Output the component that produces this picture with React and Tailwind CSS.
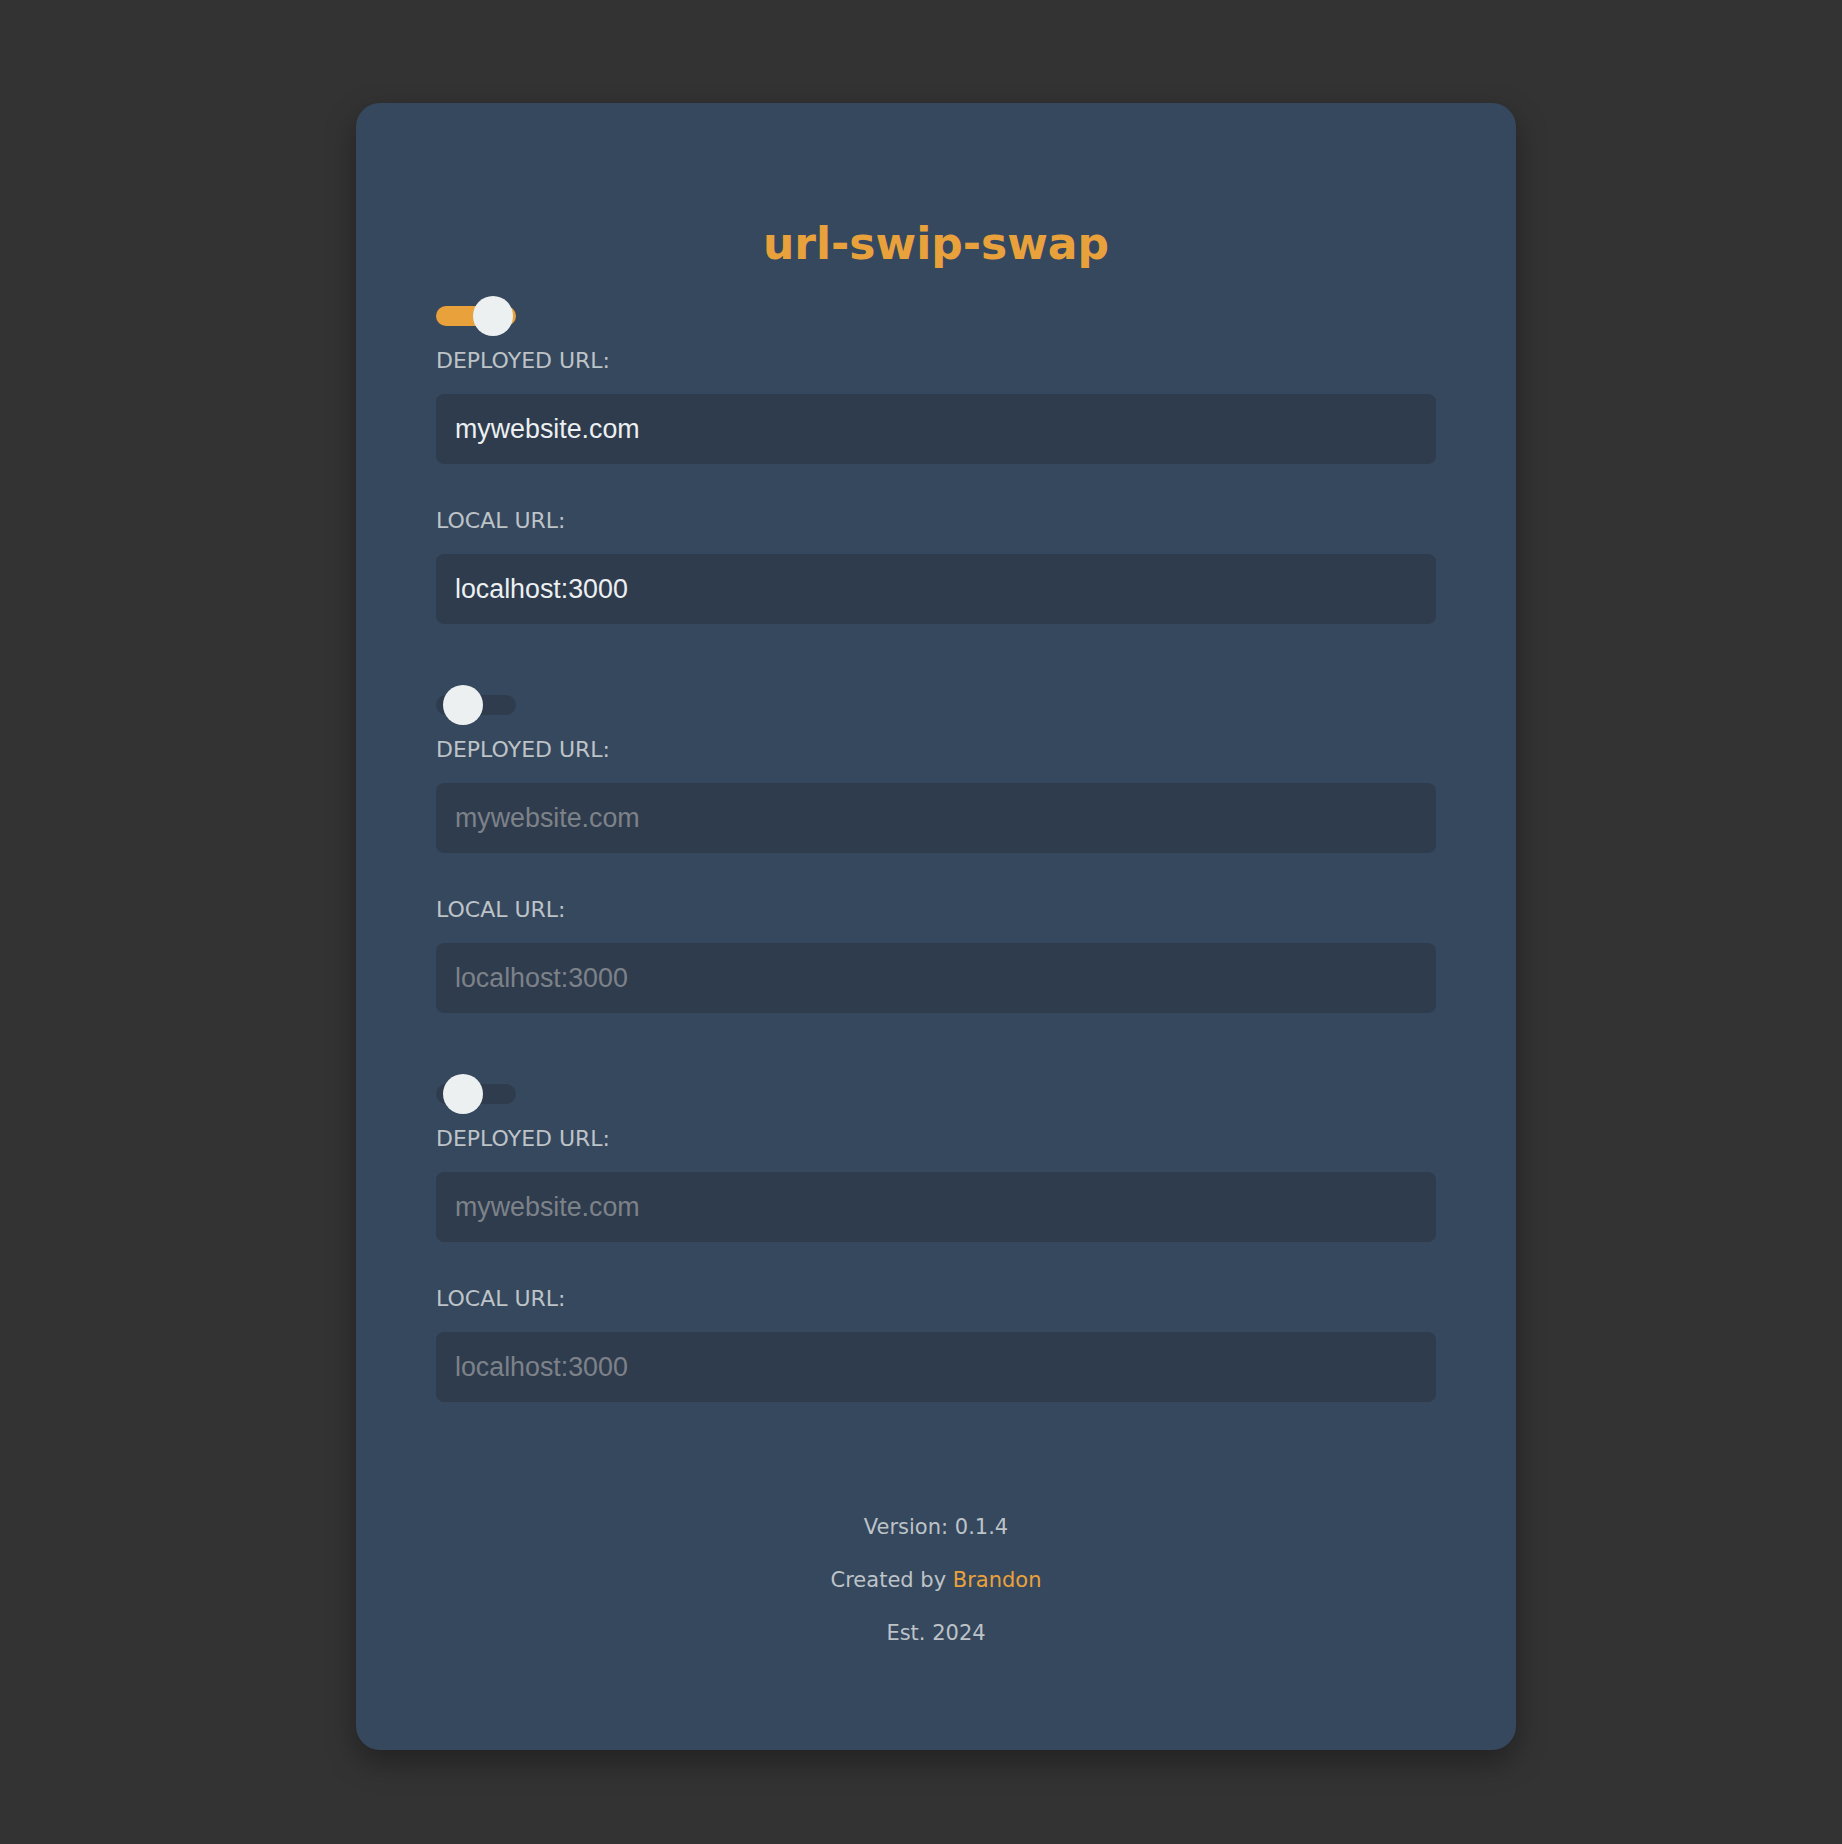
import { useState } from "react";

const SANS = "font-['DejaVu_Sans',_Verdana,_sans-serif]";

function Toggle({ on, onChange }) {
  return (
    <button
      type="button"
      onClick={onChange}
      className="relative flex h-[40px] w-[80px] items-center"
    >
      <span
        className={`block h-[20px] w-[80px] rounded-full ${
          on ? "bg-[#e9a23b]" : "bg-[#2f3c4e]"
        }`}
      />
      <span
        className={`absolute top-0 h-[40px] w-[40px] rounded-full bg-[#ecf0f1] ${
          on ? "left-[37px]" : "left-[7px]"
        }`}
      />
    </button>
  );
}

function UrlField({ label, placeholder, value, onChange, disabled }) {
  return (
    <div className="flex flex-col gap-[21px]">
      <label className={`${SANS} text-[22px] leading-[24px] text-[#bdc3c7]`}>
        {label}
      </label>
      <input
        type="text"
        value={value}
        placeholder={placeholder}
        disabled={disabled}
        onChange={(e) => onChange(e.target.value)}
        className="h-[70px] w-full rounded-[8px] bg-[#2f3c4e] pl-[19px] pr-4 font-['Liberation_Sans',_Arial,_sans-serif] text-[26.8px] text-[#ecf0f1] outline-none placeholder:text-[#7d8289]"
      />
    </div>
  );
}

export default function App() {
  const [rows, setRows] = useState([
    { on: true, deployed: "mywebsite.com", local: "localhost:3000" },
    { on: false, deployed: "", local: "" },
    { on: false, deployed: "", local: "" },
  ]);

  const update = (i, patch) =>
    setRows((prev) => prev.map((r, idx) => (idx === i ? { ...r, ...patch } : r)));

  return (
    <div className="flex min-h-screen justify-center bg-[#333333] pb-[94px] pl-[30px] pt-[103px]">
      <div className="flex w-[1160px] flex-col rounded-[24px] bg-[#36485e] px-[80px] pb-[105px] pt-[116px] shadow-[0_12px_30px_rgba(0,0,0,0.35)]">
        <h1
          className={`${SANS} text-center text-[44px] font-bold leading-[50px] text-[#e9a23b]`}
        >
          url-swip-swap
        </h1>

        <div className="mt-[27px] flex flex-col gap-[61px]">
          {rows.map((row, i) => (
            <div key={i} className="flex flex-col">
              <Toggle on={row.on} onChange={() => update(i, { on: !row.on })} />
              <div className="mt-[13px] flex flex-col gap-[45px]">
                <UrlField
                  label="DEPLOYED URL:"
                  placeholder="mywebsite.com"
                  value={row.deployed}
                  onChange={(v) => update(i, { deployed: v })}
                />
                <UrlField
                  label="LOCAL URL:"
                  placeholder="localhost:3000"
                  value={row.local}
                  onChange={(v) => update(i, { local: v })}
                />
              </div>
            </div>
          ))}
        </div>

        <footer
          className={`${SANS} mt-[113px] flex flex-col items-center gap-[29px] text-[21px] leading-[24px] text-[#bdc3c7]`}
        >
          <p>Version: 0.1.4</p>
          <p>
            Created by <a className="text-[#e9a23b]">Brandon</a>
          </p>
          <p>Est. 2024</p>
        </footer>
      </div>
    </div>
  );
}
